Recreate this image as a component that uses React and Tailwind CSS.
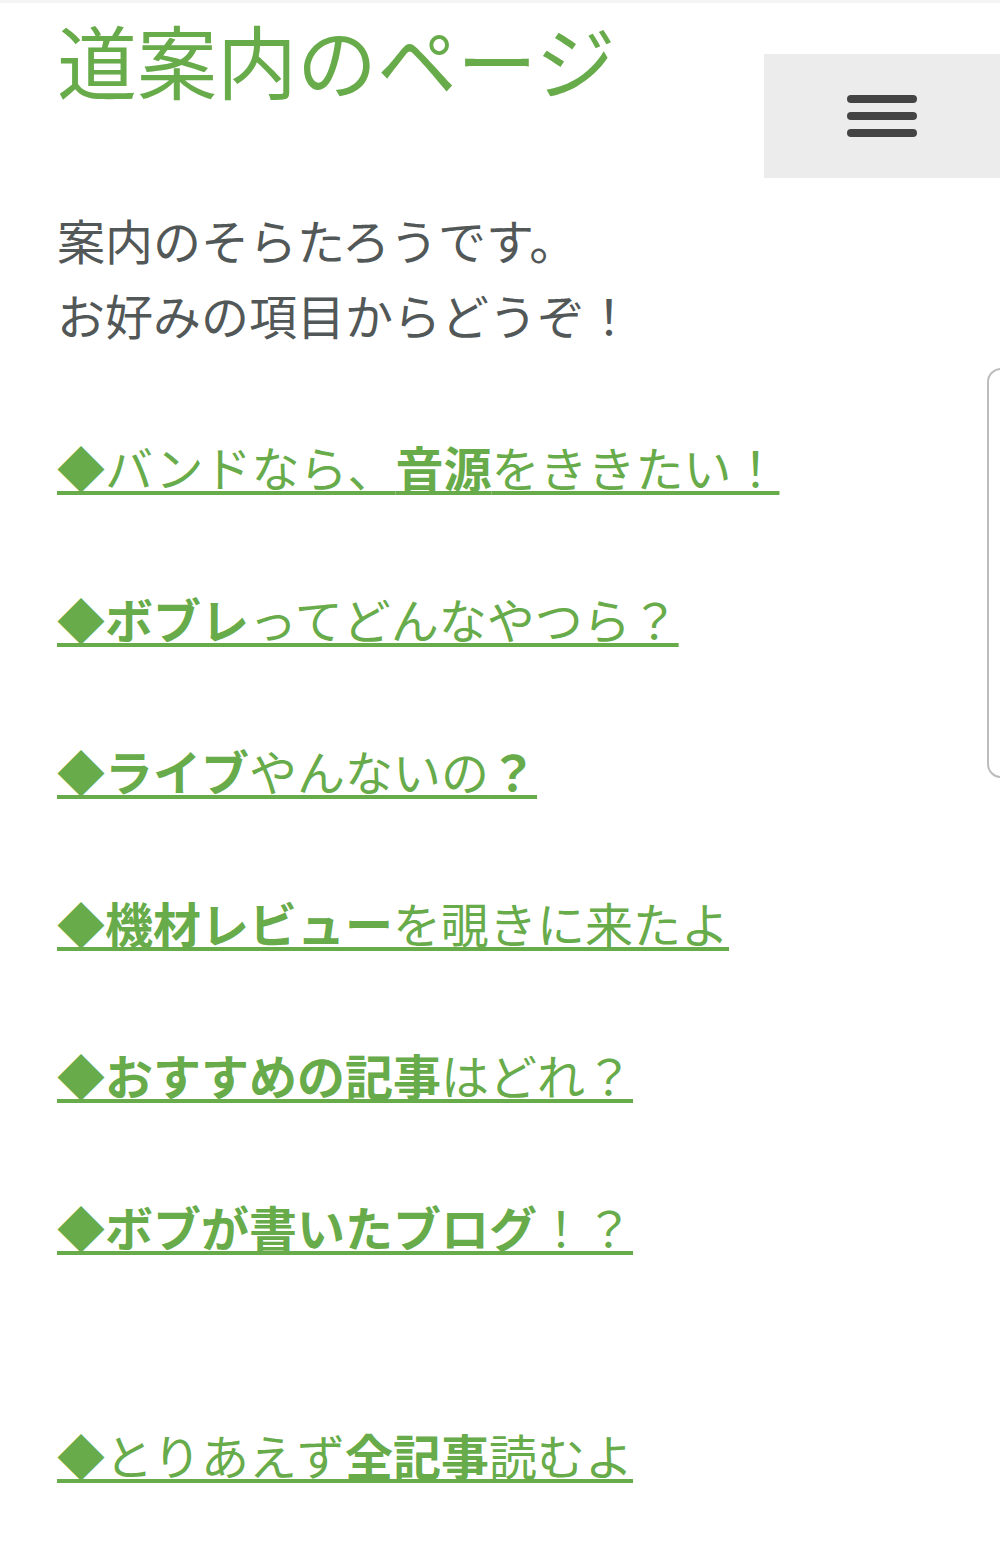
const links = [
  [["◆", false], ["バンドなら、", false], ["音源", true], ["をききたい！", false]],
  [["◆", false], ["ボブレ", true], ["ってどんなやつら？", false]],
  [["◆", false], ["ライブ", true], ["やんないの", false], ["？", true]],
  [["◆", false], ["機材レビュー", true], ["を覗きに来たよ", false]],
  [["◆", false], ["おすすめの記事", true], ["はどれ？", false]],
  [["◆", false], ["ボブが書いたブログ", true], ["！？", false]],
];

const last = [["◆", false], ["とりあえず", false], ["全記事", true], ["読むよ", false]];

const LinkLine = ({ parts }) => (
  <p className="h-[76px]">
    <a
      href="#"
      className="text-[#67ab4a] underline decoration-[4px] underline-offset-[4px]"
    >
      {parts.map(([t, b], i) => (
        <span key={i} className={b ? "font-bold" : "font-normal"}>{t}</span>
      ))}
    </a>
  </p>
);

export default function App() {
  return (
    <div
      className="relative min-h-[1557px] bg-white overflow-hidden"
      style={{ fontFamily: '"Noto Sans CJK JP", "Noto Sans", sans-serif' }}
    >
      <div className="h-[3px] bg-[#f4f4f4]" />

      {/* menu button */}
      <button className="absolute top-[54px] right-0 w-[236px] h-[124px] bg-[#ececec] flex flex-col items-center justify-center gap-[9px]">
        <span className="block w-[70px] h-[8px] rounded-full bg-[#444]" />
        <span className="block w-[70px] h-[8px] rounded-full bg-[#444]" />
        <span className="block w-[70px] h-[8px] rounded-full bg-[#444]" />
      </button>

      {/* edge handle */}
      <div className="absolute left-[987px] top-[368px] w-[30px] h-[410px] border-2 border-[#bdbdbd] rounded-l-[14px]" />

      <div className="pl-[57px]">
        <h1 className="mt-[15px] text-[80px] leading-none font-normal text-[#67ab4a]">
          道案内のページ
        </h1>

        <div className="mt-[104px] text-[48px] leading-[75px] text-[#525757]">
          <p>案内のそらたろうです。</p>
          <p>お好みの項目からどうぞ！</p>
        </div>

        <div className="mt-[76px] text-[48px] leading-[76px] flex flex-col gap-[76px]">
          {links.map((parts, i) => (
            <LinkLine key={i} parts={parts} />
          ))}
          <div className="h-[76px] -mt-[76px]" />
          <LinkLine parts={last} />
        </div>
      </div>
    </div>
  );
}
